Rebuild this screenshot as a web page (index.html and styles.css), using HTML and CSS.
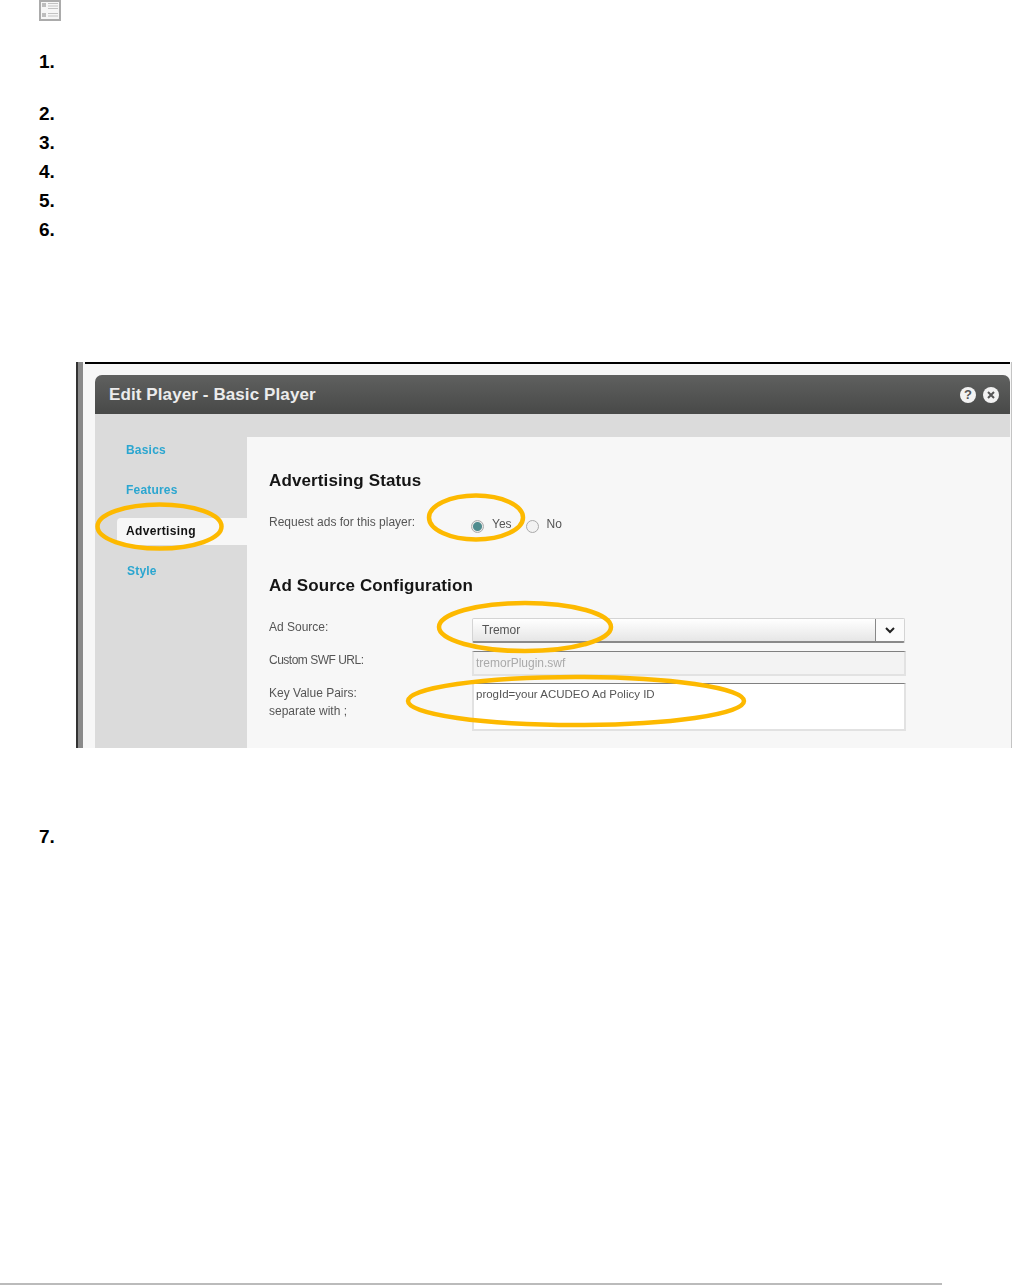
FILE: index.html
```html
<!DOCTYPE html>
<html>
<head>
	<meta charset="UTF-8">
	<title>Edit Player - Advertising</title>
	<link rel="stylesheet" href="styles.css">
</head>
<body>
	<div class="page">
		<svg class="note-icon" width="23" height="21" viewBox="0 0 23 21">
			<rect x="1" y="1" width="20" height="19" fill="#f6f6f6" stroke="#ababab" stroke-width="2"/>
			<rect x="3" y="3" width="4" height="4" fill="#bdbdbd"/>
			<rect x="3" y="13" width="4" height="4" fill="#bdbdbd"/>
			<path d="M9 3.500h10M9 6h10M9 8.500h10M9 13.500h10M9 16h10" stroke="#c2c2c2" fill="none"/>
		</svg>
		<ol class="steps">
			<li class="step step-tall"><span class="num">1.</span></li>
			<li class="step"><span class="num">2.</span></li>
			<li class="step"><span class="num">3.</span></li>
			<li class="step"><span class="num">4.</span></li>
			<li class="step"><span class="num">5.</span></li>
			<li class="step"><span class="num">6.</span></li>
			<li class="shot-row">
				<div class="shot">
					<div class="dialog">
						<div class="dialog-head">
							<span class="dialog-title">Edit Player - Basic Player</span>
							<span class="head-btn">?</span>
							<span class="head-btn">
								<svg width="8" height="8" viewBox="0 0 8 8"><path d="M1 1l6 6M7 1l-6 6" stroke="#555" stroke-width="2"/></svg>
							</span>
						</div>
						<div class="dialog-body">
							<ul class="side-nav">
								<li class="nav-item">Basics</li>
								<li class="nav-item">Features</li>
								<li class="nav-item nav-active">Advertising</li>
								<li class="nav-item nav-style">Style</li>
							</ul>
							<div class="panel">
								<h3 class="panel-title">Advertising Status</h3>
								<div class="form-row status-row">
									<span class="form-label">Request ads for this player:</span>
									<span class="radio radio-on"></span>
									<span class="radio-text">Yes</span>
									<span class="radio"></span>
									<span class="radio-text">No</span>
								</div>
								<h3 class="panel-title second">Ad Source Configuration</h3>
								<div class="form-row source-row">
									<span class="form-label">Ad Source:</span>
									<div class="select">
										<span class="select-value">Tremor</span>
										<span class="select-btn">
											<svg width="10" height="7" viewBox="0 0 10 7"><path d="M1 1l4 4 4-4" fill="none" stroke="#222" stroke-width="2"/></svg>
										</span>
									</div>
								</div>
								<div class="form-row swf-row">
									<span class="form-label">Custom SWF URL:</span>
									<div class="field field-off">tremorPlugin.swf</div>
								</div>
								<div class="form-row pairs-row">
									<span class="form-label">Key Value Pairs:<br>separate with ;</span>
									<div class="field field-area">progId=your ACUDEO Ad Policy ID</div>
								</div>
							</div>
						</div>
					</div>
					<svg class="marks" width="936" height="386" viewBox="0 0 936 386">
						<ellipse cx="83.500" cy="164.500" rx="62" ry="22"/>
						<ellipse cx="400" cy="155.500" rx="47" ry="22"/>
						<ellipse cx="449" cy="265" rx="86" ry="24"/>
						<ellipse cx="500" cy="339" rx="168" ry="24"/>
					</svg>
				</div>
			</li>
			<li class="step step-last"><span class="num">7.</span></li>
		</ol>
		<div class="foot-rule"></div>
	</div>
</body>
</html>
```

FILE: styles.css
```css
html, body {
	margin: 0;
	padding: 0;
	background: #fff;
}
.page {
	height: 1285px;
	display: flex;
	flex-direction: column;
	font-family: "Liberation Sans", Arial, sans-serif;
	overflow: hidden;
}
.note-icon {
	display: block;
	margin-left: 39px;
	flex: none;
}
.steps {
	list-style: none;
	margin: 26px 0 0 39px;
	padding: 0;
}
.step {
	height: 29px;
	line-height: 29px;
}
.step-tall {
	height: 52px;
}
.step-last {
	margin-top: 74px;
}
.num {
	font-size: 19px;
	font-weight: bold;
	color: #000;
}
.shot-row {
	margin: 118px 0 0 37px;
}

/* the screenshot of the dialog */
.shot {
	position: relative;
	width: 936px;
	height: 386px;
	overflow: hidden;
	box-sizing: border-box;
	padding: 13px 2px 0 17px;
	background: linear-gradient(#000, #000) 7px 0 / 925px 2px no-repeat, #f7f7f7;
	border-left: 2px solid #333;
	box-shadow: inset 5px 0 0 #8a8a8a, inset -1px 0 0 #c4c4c4;
}
.dialog {
	height: 373px;
	background: #dbdbdb;
	border-radius: 7px 7px 0 0;
	filter: blur(0.35px);
}
.dialog-head {
	height: 39px;
	display: flex;
	align-items: center;
	gap: 7px;
	padding: 0 11px 0 14px;
	background: linear-gradient(#5f605f, #484948);
	border-radius: 7px 7px 0 0;
}
.dialog-title {
	flex: 1;
	font-size: 17px;
	font-weight: bold;
	letter-spacing: 0.1px;
	color: #ececec;
}
.head-btn {
	width: 16px;
	height: 16px;
	display: flex;
	align-items: center;
	justify-content: center;
	border-radius: 50%;
	background: #f2f2f2;
	color: #555;
	font-size: 13px;
	font-weight: bold;
}
.dialog-body {
	display: grid;
	grid-template-columns: 152px 1fr;
}
.side-nav {
	list-style: none;
	margin: 0;
	padding: 23px 0 0 22px;
	display: flex;
	flex-direction: column;
	gap: 13.3px;
}
.nav-item {
	height: 27px;
	line-height: 27px;
	padding-left: 9px;
	font-size: 12px;
	font-weight: bold;
	letter-spacing: 0.2px;
	color: #2ba6d0;
}
.nav-active {
	background: #f7f7f7;
	color: #111;
	letter-spacing: 0.35px;
	border-radius: 4px 0 0 4px;
}
.nav-style {
	padding-left: 10px;
}
.panel {
	margin-top: 23px;
	height: 311px;
	padding-left: 22px;
	background: #f7f7f7;
}
.panel-title {
	margin: 0;
	padding-top: 34px;
	font-size: 17px;
	line-height: 20px;
	font-weight: bold;
	letter-spacing: 0.12px;
	color: #151515;
}
.panel-title.second {
	padding-top: 45px;
}
.form-row {
	display: flex;
	font-size: 12px;
	color: #555;
}
.form-label {
	flex: none;
	width: 203px;
	line-height: 18px;
}
.status-row {
	margin-top: 22px;
	height: 18px;
	align-items: flex-start;
}
.status-row .form-label {
	width: 202px;
}
.radio {
	width: 11px;
	height: 11px;
	margin: 7px 8px 0 0;
	flex: none;
	border: 1px solid #aaa;
	border-radius: 50%;
	background: #f2f2f2;
}
.radio-on {
	background: radial-gradient(circle, #4f8b8e 0 4px, #e8e8e8 5px);
}
.radio-text {
	line-height: 14px;
	margin-top: 4px;
	margin-right: 14px;
}
.source-row {
	margin-top: 22px;
	height: 25px;
}
.select {
	width: 433px;
	height: 25px;
	box-sizing: border-box;
	display: flex;
	border: 1px solid #d4d4d4;
	border-bottom: 2px solid #8a8a8a;
	border-radius: 2px;
	background: linear-gradient(#fff, #e6e6e6);
}
.select-value {
	flex: 1;
	padding-left: 9px;
	line-height: 23px;
	color: #555;
}
.select-btn {
	width: 28px;
	display: flex;
	align-items: center;
	justify-content: center;
	border-left: 1px solid #888;
	background: #fbfbfb;
}
.swf-row {
	margin-top: 8px;
}
.swf-row .form-label {
	letter-spacing: -0.5px;
}
.pairs-row {
	margin-top: 7px;
}
.field {
	width: 434px;
	box-sizing: border-box;
	padding: 0 2px;
	border: 2px solid #e2e2e2;
	border-top: 1px solid #808080;
}
.field-off {
	height: 25px;
	line-height: 22px;
	background: #f3f3f3;
	color: #aaa;
}
.field-area {
	height: 48px;
	line-height: 20px;
	font-size: 11.5px;
	background: #fff;
	color: #555;
}
.pairs-row .form-label {
	padding-top: 1px;
}

/* hand drawn marks over the screenshot */
.marks {
	position: absolute;
	left: -2px;
	top: 0;
}
.marks ellipse {
	fill: none;
	stroke: #fdb900;
	stroke-width: 4.5;
}
.foot-rule {
	flex: none;
	width: 942px;
	height: 2px;
	margin-top: auto;
	background: #bbb;
}
```
